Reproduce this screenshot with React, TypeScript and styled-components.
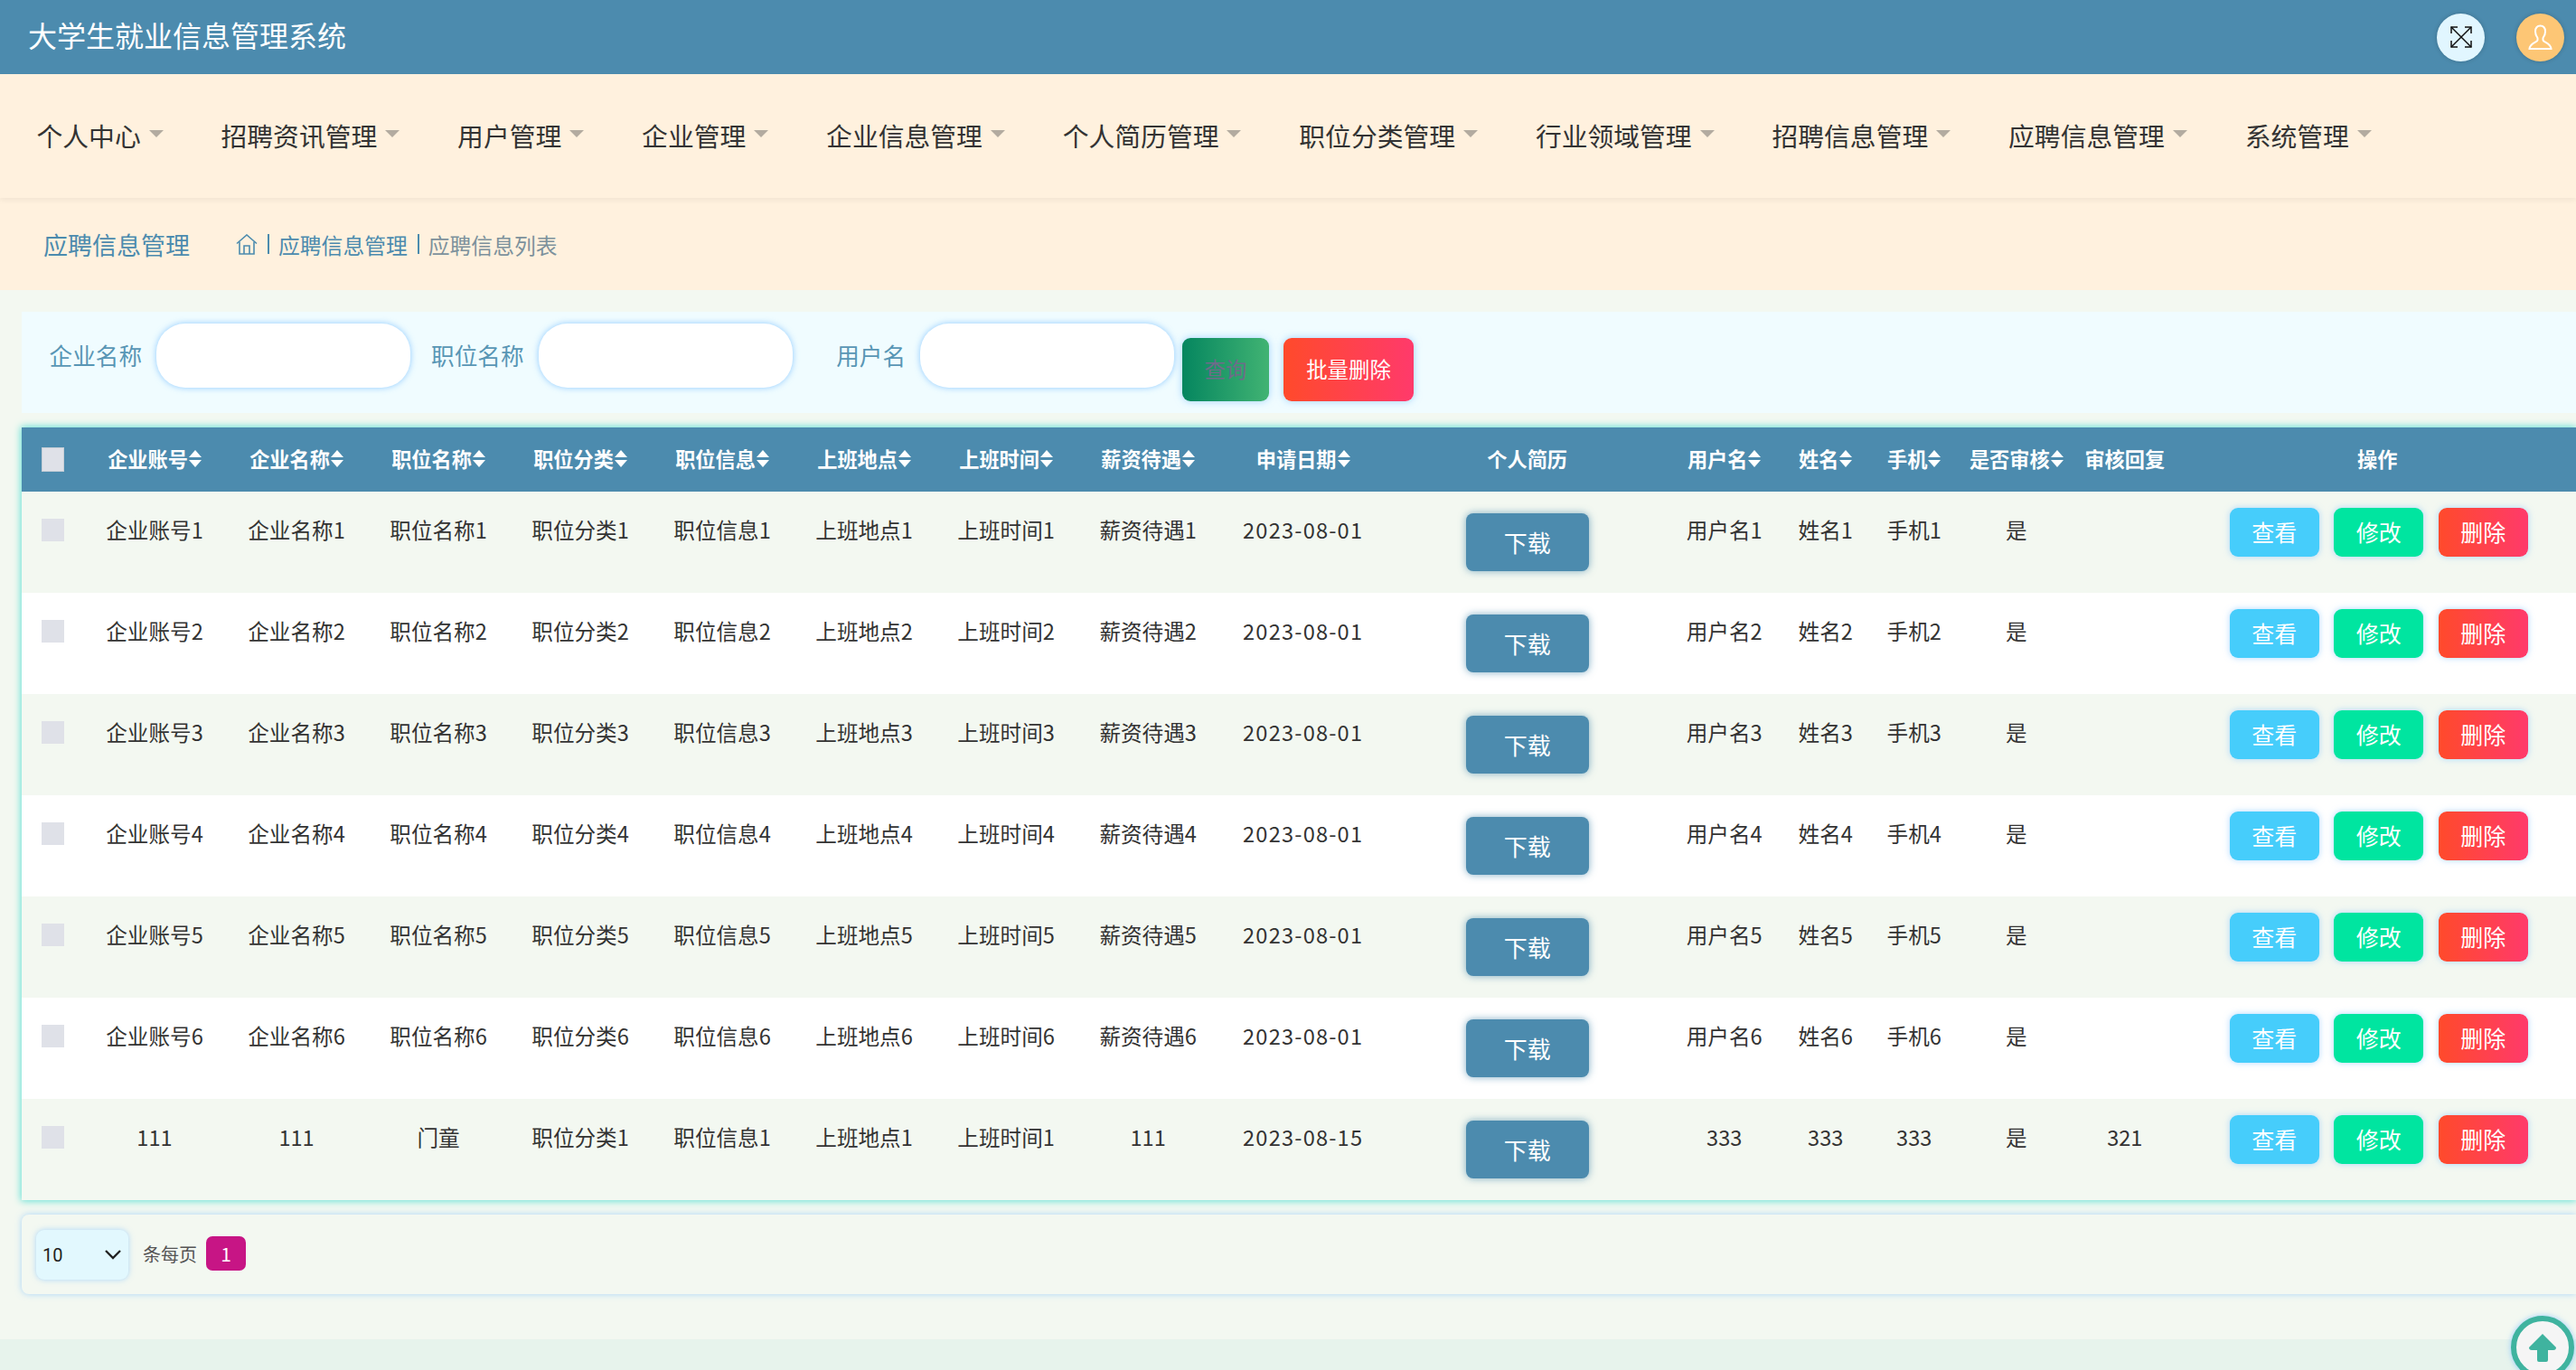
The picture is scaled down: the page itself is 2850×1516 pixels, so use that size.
import * as React from 'react';
import styled, { createGlobalStyle } from 'styled-components';

const PRIMARY = '#4c8bae';
const PANEL = '#f3f8f1';
const FONT = '"Noto Sans CJK SC", "Noto Sans", sans-serif';

const GlobalStyle = createGlobalStyle`
  html, body {
    margin: 0;
    padding: 0;
    background: #e7f3ec;
  }
  * {
    box-sizing: border-box;
  }
`;

const Page = styled.div`
  position: relative;
  width: 2850px;
  height: 1516px;
  overflow: hidden;
  font-family: ${FONT};
  color: #333;
`;

const TopBar = styled.header`
  height: 82px;
  padding: 0 13px 0 31px;
  display: flex;
  align-items: center;
  justify-content: space-between;
  background: ${PRIMARY};
`;

const SiteTitle = styled.h1`
  margin: 0;
  padding-bottom: 7px;
  font-size: 32px;
  font-weight: 400;
  color: #fff;
`;

const TopActions = styled.div`
  display: flex;
  gap: 35px;
`;

const RoundButton = styled.div<{ $bg: string }>`
  width: 53px;
  height: 53px;
  display: flex;
  align-items: center;
  justify-content: center;
  border-radius: 50%;
  background: ${(p) => p.$bg};
  box-shadow: 0 0 5px rgba(0, 0, 0, 0.2);
`;

const NavBar = styled.nav`
  position: relative;
  z-index: 2;
  height: 137px;
  padding: 0 0 3px 40.5px;
  display: flex;
  align-items: center;
  gap: 63.8px;
  background: #fff1de;
  box-shadow: 0 3px 6px rgba(0, 0, 0, 0.05);
`;

const NavItem = styled.a`
  display: flex;
  align-items: center;
  gap: 9px;
  font-size: 28.8px;
  color: #333;
`;

const Caret = styled.i`
  width: 0;
  height: 0;
  margin-top: 2px;
  margin-bottom: 4px;
  border-style: solid;
  border-width: 8px 8px 0;
  border-color: #b3aba0 transparent transparent;
`;

const Crumbs = styled.div`
  height: 102px;
  padding-left: 48px;
  display: flex;
  align-items: center;
  background: #fff1de;
`;

const CrumbTitle = styled.div`
  width: 213px;
  font-size: 27px;
  color: ${PRIMARY};
`;

const CrumbLink = styled.span<{ $muted?: boolean }>`
  font-size: 23.8px;
  color: ${(p) => (p.$muted ? '#7d919c' : PRIMARY)};
`;

const CrumbSep = styled.span`
  width: 2px;
  height: 22px;
  margin: 0 10px 0 11px;
  background: ${PRIMARY};
`;

const Main = styled.main`
  height: 1161px;
  padding: 24px 0 0 24px;
  display: flex;
  flex-direction: column;
  gap: 16px;
  background: ${PANEL};
`;

const SearchPanel = styled.form`
  height: 112px;
  padding: 13px 0 0 28px;
  display: flex;
  align-items: flex-start;
  background: #f0fcff;
`;

const Field = styled.label`
  margin-right: 20.5px;
  display: flex;
  align-items: center;
  gap: 16px;
  &:last-of-type {
    margin-right: 9px;
  }
`;

const FieldName = styled.span`
  width: 105px;
  padding-bottom: 2px;
  text-align: right;
  font-size: 25.6px;
  color: #5896b5;
`;

const TextInput = styled.input`
  width: 281px;
  height: 71px;
  border: 0;
  outline: 0;
  border-radius: 32px;
  background: #fff;
  box-shadow: 0 0 7px rgba(110, 185, 255, 0.75);
`;

const SearchButton = styled.button<{ $bg: string; $color: string; $w: number }>`
  width: ${(p) => p.$w}px;
  height: 70px;
  margin: 16px 16px 0 0;
  padding: 0 0 2px;
  border: 0;
  border-radius: 9px;
  background: ${(p) => p.$bg};
  color: ${(p) => p.$color};
  font-family: ${FONT};
  font-size: 23.4px;
  box-shadow: 0 0 8px rgba(110, 185, 255, 0.6);
`;

const TableBox = styled.div`
  box-shadow: 0 0 8px 1px #62e0d5;
`;

const Grid = styled.table`
  width: 2826.5px;
  border-collapse: collapse;
  table-layout: fixed;
`;

const Col = styled.col<{ $w: number }>`
  width: ${(p) => p.$w}px;
`;

const HeadRow = styled.tr`
  height: 71px;
  background: ${PRIMARY};
`;

const HeadCell = styled.th<{ $shift?: number }>`
  padding: 0 ${(p) => p.$shift || 0}px 3px 0;
  text-align: center;
  font-size: 22.2px;
  font-weight: 700;
  color: #fff;
  white-space: nowrap;
`;

const HeadLabel = styled.span`
  display: inline-flex;
  align-items: center;
  gap: 1px;
`;

const SortGlyph = styled.svg`
  flex: none;
  width: 14px;
  height: 19px;
`;

const Row = styled.tr`
  height: 112px;
  background: #fff;
  &:nth-child(odd) {
    background: ${PANEL};
  }
`;

const Cell = styled.td<{ $shift?: number; $date?: boolean }>`
  padding: 22px ${(p) => p.$shift || 0}px 0 0;
  vertical-align: top;
  text-align: center;
  font-size: 23.6px;
  line-height: 40px;
  letter-spacing: ${(p) => (p.$date ? '1.2px' : '0')};
  color: #333;
  white-space: nowrap;
`;

const TickCell = styled.td`
  padding: 30px 0 0;
  vertical-align: top;
  text-align: center;
  line-height: 0;
`;

const HeadTickCell = styled.th`
  padding: 0;
  text-align: center;
  line-height: 0;
`;

const Tick = styled.input.attrs({ type: 'checkbox' })<{ $head?: boolean }>`
  appearance: none;
  width: 25px;
  height: ${(p) => (p.$head ? 27 : 25)}px;
  margin: 0;
  background: #dfe1e8;
  border: ${(p) => (p.$head ? '1px solid #c6ced6' : '0')};
`;

const DownloadButton = styled.button`
  width: 136px;
  height: 64px;
  margin-top: 2px;
  padding: 0 0 2px;
  border: 0;
  border-radius: 8px;
  background: ${PRIMARY};
  color: #fff;
  font-family: ${FONT};
  font-size: 26px;
  box-shadow: 0 0 8px rgba(76, 139, 174, 0.7);
`;

const Actions = styled.div`
  margin-top: -4px;
  display: flex;
  justify-content: center;
  gap: 16.5px;
`;

const ActionButton = styled.button<{ $bg: string }>`
  width: 99px;
  height: 54px;
  padding: 0 0 2px;
  border: 0;
  border-radius: 9px;
  background: ${(p) => p.$bg};
  color: #fff;
  font-family: ${FONT};
  font-size: 25px;
  box-shadow: 0 0 7px rgba(110, 185, 255, 0.55);
`;

const Pager = styled.div`
  height: 88px;
  padding: 17px 0 0 16px;
  display: flex;
  align-items: flex-start;
  border-radius: 8px 0 0 8px;
  background: ${PANEL};
  box-shadow: 0 0 7px rgba(110, 185, 255, 0.55);
`;

const PageSize = styled.div`
  width: 102px;
  height: 55px;
  padding: 0 8px 0 7px;
  display: flex;
  align-items: center;
  justify-content: space-between;
  border-radius: 9px;
  background: #e2f8fe;
  font-family: Roboto, sans-serif;
  font-size: 20px;
  color: #222;
  box-shadow: 0 0 6px rgba(110, 185, 255, 0.55);
`;

const PagerText = styled.span`
  margin: 10px 10px 0 16px;
  font-size: 20px;
  line-height: 34px;
  color: #555;
`;

const PageNumber = styled.span`
  width: 44px;
  height: 38px;
  margin-top: 7px;
  display: flex;
  align-items: center;
  justify-content: center;
  border-radius: 7px;
  background: #c71585;
  font-size: 21px;
  color: #fff;
`;

const Footer = styled.footer`
  height: 34px;
  background: #e7f3ec;
`;

const BackTop = styled.div`
  position: absolute;
  left: 2778px;
  top: 1456px;
  width: 70px;
  height: 70px;
  display: flex;
  align-items: center;
  justify-content: center;
  border: 6.5px solid #3fb39f;
  border-radius: 50%;
  background: #f5f5f5;
  box-shadow: 0 0 6px rgba(110, 185, 255, 0.7);
`;

const RED = 'linear-gradient(90deg, #ff4a2b, #ff3a6b)';

const menus = [
  '个人中心',
  '招聘资讯管理',
  '用户管理',
  '企业管理',
  '企业信息管理',
  '个人简历管理',
  '职位分类管理',
  '行业领域管理',
  '招聘信息管理',
  '应聘信息管理',
  '系统管理',
];

const widths = [68.5, 157, 157, 157, 157, 157, 157, 157, 157, 186, 312, 122, 102, 94, 132, 116, 437.5];

const heads = [
  '企业账号',
  '企业名称',
  '职位名称',
  '职位分类',
  '职位信息',
  '上班地点',
  '上班时间',
  '薪资待遇',
  '申请日期',
];

const rows = [1, 2, 3, 4, 5, 6].map((i) => ({
  before: [`企业账号${i}`, `企业名称${i}`, `职位名称${i}`, `职位分类${i}`, `职位信息${i}`, `上班地点${i}`, `上班时间${i}`, `薪资待遇${i}`, '2023-08-01'],
  after: [`用户名${i}`, `姓名${i}`, `手机${i}`, '是', ''],
}));

rows.push({
  before: ['111', '111', '门童', '职位分类1', '职位信息1', '上班地点1', '上班时间1', '111', '2023-08-15'],
  after: ['333', '333', '333', '是', '321'],
});

const SortIcon = () => (
  <SortGlyph viewBox="0 0 14 19" fill="#fff">
    <path d="M7 0 L14 8 H0 Z" />
    <path d="M0 11 H14 L7 19 Z" />
  </SortGlyph>
);

const Head = ({ text, sort = true, shift }: { text: string; sort?: boolean; shift?: number }) => (
  <HeadCell $shift={shift}>
    <HeadLabel>
      {text}
      {sort && <SortIcon />}
    </HeadLabel>
  </HeadCell>
);

export default function App() {
  return (
    <Page>
      <GlobalStyle />
      <TopBar>
        <SiteTitle>大学生就业信息管理系统</SiteTitle>
        <TopActions>
          <RoundButton $bg="#e1f6ff">
            <svg width="24" height="24" viewBox="0 0 24 24" fill="none" stroke="#111" strokeWidth="1.5">
              <path d="M1 1 L23 23 M23 1 L1 23" />
              <path d="M1 8 V1 H8 M16 1 H23 V8 M1 16 V23 H8 M23 16 V23 H16" />
            </svg>
          </RoundButton>
          <RoundButton $bg="#fdc675">
            <svg width="27" height="28" viewBox="0 0 27 28" fill="none" stroke="#fff" strokeWidth="2">
              <path d="M13.5 1.5 C9.5 1.5 8 4.5 8 8 C8 11 9.3 13.5 10.5 15 V17.5 C10.5 19.5 2 20.5 1.5 27 H25.5 C25 20.5 16.5 19.5 16.5 17.5 V15 C17.7 13.5 19 11 19 8 C19 4.5 17.5 1.5 13.5 1.5 Z" />
            </svg>
          </RoundButton>
        </TopActions>
      </TopBar>

      <NavBar>
        {menus.map((m) => (
          <NavItem key={m}>
            {m}
            <Caret />
          </NavItem>
        ))}
      </NavBar>

      <Crumbs>
        <CrumbTitle>应聘信息管理</CrumbTitle>
        <svg width="24" height="23" viewBox="0 0 24 23" fill="none" stroke={PRIMARY} strokeWidth="1.6">
          <path d="M1 10.5 L12 1 L23 10.5" />
          <path d="M4 8.5 V22 H20 V8.5" />
          <path d="M9 22 V13 H15 V22" />
        </svg>
        <CrumbSep />
        <CrumbLink>应聘信息管理</CrumbLink>
        <CrumbSep />
        <CrumbLink $muted>应聘信息列表</CrumbLink>
      </Crumbs>

      <Main>
        <SearchPanel>
          <Field>
            <FieldName>企业名称</FieldName>
            <TextInput />
          </Field>
          <Field>
            <FieldName>职位名称</FieldName>
            <TextInput />
          </Field>
          <Field>
            <FieldName>用户名</FieldName>
            <TextInput />
          </Field>
          <SearchButton type="button" $w={96} $color="#6f6b8a" $bg="linear-gradient(90deg, #05865f, #41b373)">
            查询
          </SearchButton>
          <SearchButton type="button" $w={144} $color="#fff" $bg={RED}>
            批量删除
          </SearchButton>
        </SearchPanel>

        <TableBox>
          <Grid>
            <colgroup>
              {widths.map((w, i) => (
                <Col key={i} $w={w} />
              ))}
            </colgroup>
            <thead>
              <HeadRow>
                <HeadTickCell>
                  <Tick $head />
                </HeadTickCell>
                {heads.map((h) => (
                  <Head key={h} text={h} />
                ))}
                <Head text="个人简历" sort={false} shift={2} />
                <Head text="用户名" />
                <Head text="姓名" />
                <Head text="手机" />
                <Head text="是否审核" />
                <Head text="审核回复" sort={false} shift={8} />
                <Head text="操作" sort={false} shift={3} />
              </HeadRow>
            </thead>
            <tbody>
              {rows.map((r, i) => (
                <Row key={i}>
                  <TickCell>
                    <Tick />
                  </TickCell>
                  {r.before.map((t, j) => (
                    <Cell key={j} $date={j === 8}>
                      {t}
                    </Cell>
                  ))}
                  <Cell $shift={2}>
                    <DownloadButton type="button">下载</DownloadButton>
                  </Cell>
                  {r.after.map((t, j) => (
                    <Cell key={j} $shift={j === 4 ? 8 : 0}>
                      {t}
                    </Cell>
                  ))}
                  <Cell>
                    <Actions>
                      <ActionButton type="button" $bg="#46cdfb">查看</ActionButton>
                      <ActionButton type="button" $bg="#00e5a0">修改</ActionButton>
                      <ActionButton type="button" $bg={RED}>删除</ActionButton>
                    </Actions>
                  </Cell>
                </Row>
              ))}
            </tbody>
          </Grid>
        </TableBox>

        <Pager>
          <PageSize>
            10
            <svg width="18" height="11" viewBox="0 0 18 11" fill="none" stroke="#222" strokeWidth="2.4">
              <path d="M1 1 L9 9 L17 1" />
            </svg>
          </PageSize>
          <PagerText>条每页</PagerText>
          <PageNumber>1</PageNumber>
        </Pager>
      </Main>

      <Footer />

      <BackTop>
        <svg width="30" height="31" viewBox="0 0 30 31" fill="#3fb39f">
          <path d="M15 0 L30 15 Q30 18 27 18 H21 V29 Q21 31 19 31 H11 Q9 31 9 29 V18 H3 Q0 18 0 15 Z" />
        </svg>
      </BackTop>
    </Page>
  );
}
